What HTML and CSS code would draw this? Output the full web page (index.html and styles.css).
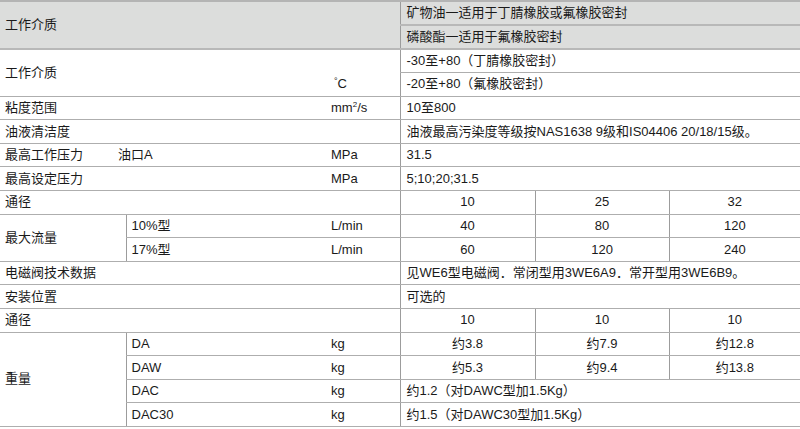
FILE: index.html
```html
<!DOCTYPE html>
<html lang="zh">
<head>
<meta charset="utf-8">
<link rel="stylesheet" href="styles.css">
</head>
<body>
<table class="spec">
  <colgroup>
    <col class="c1"><col class="c2"><col class="c3"><col class="c4"><col class="c5"><col class="c6">
  </colgroup>
  <tr class="hd">
    <td colspan="3" rowspan="2" class="lbl">工作介质</td>
    <td colspan="3" class="v">矿物油一适用于丁腈橡胶或氟橡胶密封</td>
  </tr>
  <tr class="hd">
    <td colspan="3" class="v">磷酸酯一适用于氟橡胶密封</td>
  </tr>
  <tr>
    <td rowspan="2" class="lbl">工作介质</td>
    <td rowspan="2"></td>
    <td rowspan="2" class="unit bottom"><span class="deg">°</span>C</td>
    <td colspan="3" class="v">-30至+80（丁腈橡胶密封）</td>
  </tr>
  <tr>
    <td colspan="3" class="v">-20至+80（氟橡胶密封）</td>
  </tr>
  <tr>
    <td colspan="2" class="lbl">粘度范围</td>
    <td class="unit">mm<sup>2</sup>/s</td>
    <td colspan="3" class="v">10至800</td>
  </tr>
  <tr>
    <td colspan="3" class="lbl">油液清洁度</td>
    <td colspan="3" class="v">油液最高污染度等级按NAS1638 9级和IS04406 20/18/15级。</td>
  </tr>
  <tr>
    <td colspan="2" class="lbl"><span class="lead">最高工作压力</span>油口A</td>
    <td class="unit">MPa</td>
    <td colspan="3" class="v">31.5</td>
  </tr>
  <tr>
    <td colspan="2" class="lbl">最高设定压力</td>
    <td class="unit">MPa</td>
    <td colspan="3" class="v">5;10;20;31.5</td>
  </tr>
  <tr>
    <td colspan="3" class="lbl">通径</td>
    <td class="n">10</td><td class="n">25</td><td class="n">32</td>
  </tr>
  <tr>
    <td rowspan="2" class="lbl">最大流量</td>
    <td class="sub">10%型</td>
    <td class="unit">L/min</td>
    <td class="n">40</td><td class="n">80</td><td class="n">120</td>
  </tr>
  <tr>
    <td class="sub">17%型</td>
    <td class="unit">L/min</td>
    <td class="n">60</td><td class="n">120</td><td class="n">240</td>
  </tr>
  <tr>
    <td colspan="3" class="lbl">电磁阀技术数据</td>
    <td colspan="3" class="v">见WE6型电磁阀．常闭型用3WE6A9．常开型用3WE6B9。</td>
  </tr>
  <tr>
    <td colspan="3" class="lbl">安装位置</td>
    <td colspan="3" class="v">可选的</td>
  </tr>
  <tr>
    <td colspan="3" class="lbl">通径</td>
    <td class="n">10</td><td class="n">10</td><td class="n">10</td>
  </tr>
  <tr>
    <td rowspan="4" class="lbl">重量</td>
    <td class="sub">DA</td>
    <td class="unit">kg</td>
    <td class="n">约3.8</td><td class="n">约7.9</td><td class="n">约12.8</td>
  </tr>
  <tr>
    <td class="sub">DAW</td>
    <td class="unit">kg</td>
    <td class="n">约5.3</td><td class="n">约9.4</td><td class="n">约13.8</td>
  </tr>
  <tr>
    <td class="sub">DAC</td>
    <td class="unit">kg</td>
    <td colspan="3" class="v">约1.2（对DAWC型加1.5Kg）</td>
  </tr>
  <tr>
    <td class="sub">DAC30</td>
    <td class="unit">kg</td>
    <td colspan="3" class="v">约1.5（对DAWC30型加1.5Kg）</td>
  </tr>
</table>
</body>
</html>
```

FILE: styles.css
```css
html, body {
  margin: 0;
  padding: 0;
  background: #ffffff;
}

body {
  font-family: "Liberation Sans", Arial, "Noto Sans CJK SC", sans-serif;
  font-size: 13px;
  color: #1a1a1a;
}

.spec {
  width: 800px;
  border-collapse: collapse;
  table-layout: fixed;
  border-top: 2px solid #b4b4b4;
}

.c1 { width: 126px; }
.c2 { width: 200px; }
.c3 { width: 74px; }
.c4 { width: 135px; }
.c5 { width: 134px; }
.c6 { width: 131px; }

.spec tr {
  height: 23.6px;
}

.spec tr.hd {
  height: 24px;
}

.spec td {
  padding: 0 5px;
  line-height: 16px;
  border-bottom: 1px solid #aeaeae;
  white-space: nowrap;
  vertical-align: middle;
}

.hd td {
  background: #dcdddc;
  border-bottom: 2px solid #b8b8b8;
}

.lbl {
  padding-left: 4px;
}

.lead {
  display: inline-block;
  width: 113px;
}

.unit {
  padding-left: 5px;
}

.bottom {
  vertical-align: bottom !important;
  padding-bottom: 4px !important;
  padding-left: 8px !important;
}

.deg {
  font-size: 9px;
  vertical-align: 4px;
  line-height: 0;
}

.v {
  border-left: 1px solid #9c9c9c;
  padding-left: 6px !important;
}

.sub {
  border-left: 1px solid #9c9c9c;
  padding-left: 5px;
}

.n {
  border-left: 1px solid #9c9c9c;
  text-align: center;
}

sup {
  font-size: 8px;
  line-height: 0;
  vertical-align: 5px;
}
```
